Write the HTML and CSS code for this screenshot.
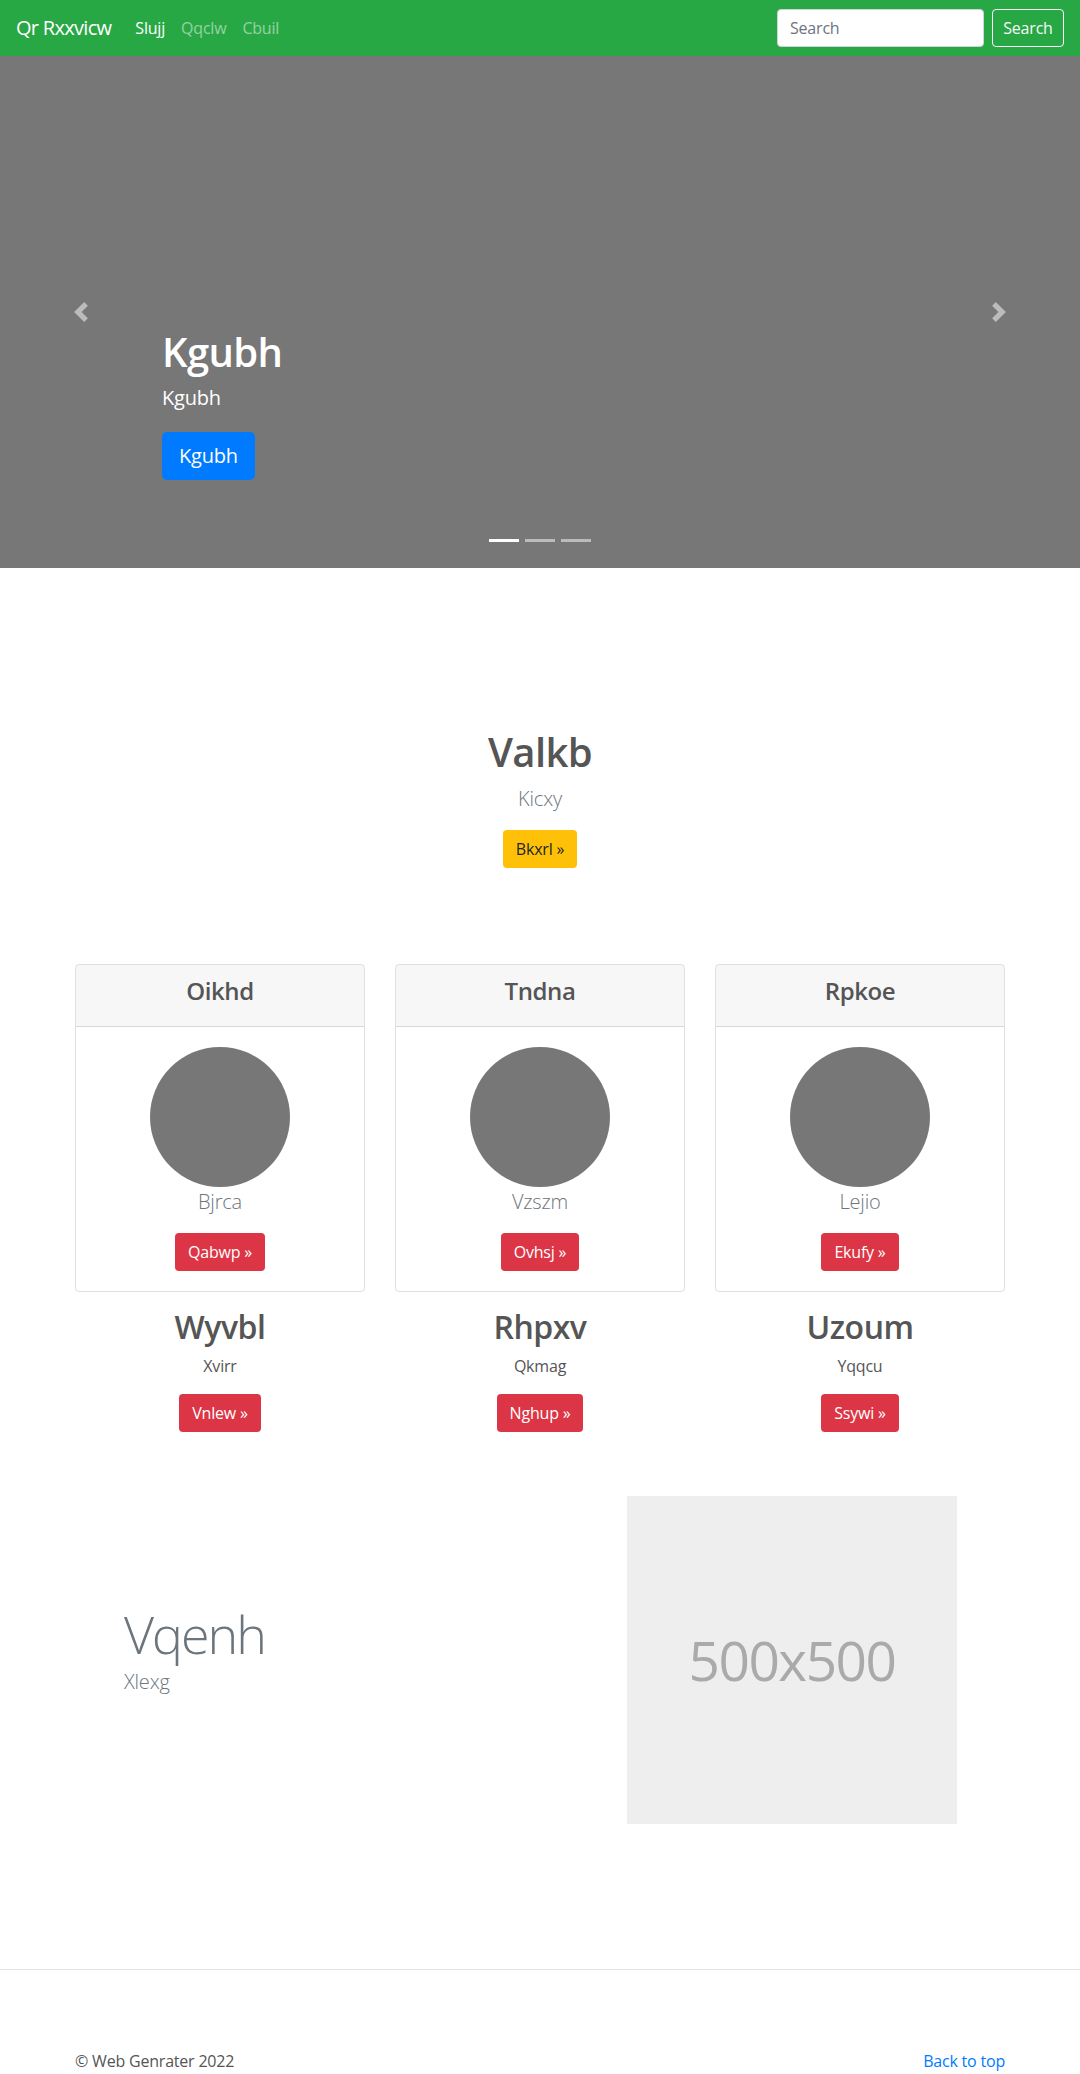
FILE: index.html
```html
<!DOCTYPE html>
<html lang="en">
<head>
<meta charset="utf-8">
<title>Qr Rxxvicw</title>
<link rel="stylesheet" href="styles.css">
</head>
<body>
<header class="navbar">
  <a class="brand" href="#">Qr Rxxvicw</a>
  <nav class="nav">
    <a class="nav-link active" href="#">Slujj</a>
    <a class="nav-link" href="#">Qqclw</a>
    <a class="nav-link" href="#">Cbuil</a>
  </nav>
  <form class="search">
    <input class="search-input" type="text" placeholder="Search">
    <button class="search-btn" type="button">Search</button>
  </form>
</header>

<section class="carousel">
  <a class="ctrl ctrl-prev" href="#">
    <svg width="20" height="20" viewBox="0 0 8 8" fill="#fff"><path d="M5.25 0l-4 4 4 4 1.5-1.5L4.25 4l2.5-2.5L5.25 0z"/></svg>
  </a>
  <a class="ctrl ctrl-next" href="#">
    <svg width="20" height="20" viewBox="0 0 8 8" fill="#fff"><path d="M2.75 0l-1.5 1.5L3.75 4l-2.5 2.5L2.75 8l4-4-4-4z"/></svg>
  </a>
  <div class="caption">
    <h1 class="caption-title">Kgubh</h1>
    <p class="caption-text">Kgubh</p>
    <p class="caption-action"><a class="btn btn-lg btn-primary" href="#">Kgubh</a></p>
  </div>
  <ol class="indicators">
    <li class="ind active"></li>
    <li class="ind"></li>
    <li class="ind"></li>
  </ol>
</section>

<section class="jumbo">
  <div class="container">
    <h1 class="jumbo-title">Valkb</h1>
    <p class="lead muted">Kicxy</p>
    <p class="last"><a class="btn btn-warning" href="#">Bkxrl »</a></p>
  </div>
</section>

<section class="container cols">
  <div class="col">
    <div class="card">
      <div class="card-header"><h4 class="card-title">Oikhd</h4></div>
      <div class="card-body">
        <svg class="circle" width="140" height="140"><circle cx="70" cy="70" r="70" fill="#777"/></svg>
        <p class="lead muted card-lead">Bjrca</p>
        <p class="last"><a class="btn btn-danger" href="#">Qabwp »</a></p>
      </div>
    </div>
    <h2 class="col-title">Wyvbl</h2>
    <p class="col-text">Xvirr</p>
    <p class="col-action"><a class="btn btn-danger" href="#">Vnlew »</a></p>
  </div>
  <div class="col">
    <div class="card">
      <div class="card-header"><h4 class="card-title">Tndna</h4></div>
      <div class="card-body">
        <svg class="circle" width="140" height="140"><circle cx="70" cy="70" r="70" fill="#777"/></svg>
        <p class="lead muted card-lead">Vzszm</p>
        <p class="last"><a class="btn btn-danger" href="#">Ovhsj »</a></p>
      </div>
    </div>
    <h2 class="col-title">Rhpxv</h2>
    <p class="col-text">Qkmag</p>
    <p class="col-action"><a class="btn btn-danger" href="#">Nghup »</a></p>
  </div>
  <div class="col">
    <div class="card">
      <div class="card-header"><h4 class="card-title">Rpkoe</h4></div>
      <div class="card-body">
        <svg class="circle" width="140" height="140"><circle cx="70" cy="70" r="70" fill="#777"/></svg>
        <p class="lead muted card-lead">Lejio</p>
        <p class="last"><a class="btn btn-danger" href="#">Ekufy »</a></p>
      </div>
    </div>
    <h2 class="col-title">Uzoum</h2>
    <p class="col-text">Yqqcu</p>
    <p class="col-action"><a class="btn btn-danger" href="#">Ssywi »</a></p>
  </div>
</section>

<section class="container featurette">
  <div class="feat-text">
    <h2 class="feat-heading">Vqenh</h2>
    <p class="lead muted feat-lead">Xlexg</p>
  </div>
  <div class="feat-image">500x500</div>
</section>

<footer class="footer">
  <div class="container footer-row">
    <p class="copy">© Web Genrater 2022</p>
    <a class="to-top" href="#">Back to top</a>
  </div>
</footer>
</body>
</html>
```

FILE: styles.css
```css
* { box-sizing: border-box; }

html, body { margin: 0; padding: 0; }

body {
  font-family: "Open Sans", "Noto Sans", sans-serif;
  font-size: 16px;
  line-height: 1.5;
  color: #555;
  background: #fff;
  letter-spacing: -0.2px;
}

a { text-decoration: none; }
p { margin: 0; }
h1, h2, h4 { margin: 0; }

/* navbar */
.navbar {
  display: flex;
  align-items: center;
  height: 56px;
  padding: 8px 16px;
  background: #28a745;
}
.brand {
  font-size: 20px;
  line-height: 30px;
  padding: 5px 0;
  margin-right: 16px;
  color: #fff;
  letter-spacing: -0.7px;
}
.nav { display: flex; }
.nav-link {
  padding: 8px;
  color: rgba(255, 255, 255, 0.5);
}
.nav-link.active { color: #fff; }
.search {
  margin: 0 0 0 auto;
  display: flex;
  align-items: center;
}
.search-input {
  width: 207px;
  height: 38px;
  padding: 6px 12px;
  border: 1px solid #ced4da;
  border-radius: 4px;
  font-family: inherit;
  font-size: 16px;
  letter-spacing: -0.2px;
  color: #495057;
  margin-right: 8px;
}
.search-input::placeholder { color: #6c757d; }
.search-btn {
  height: 38px;
  width: 72px;
  padding: 6px 0;
  border: 1px solid #f8f9fa;
  border-radius: 4px;
  background: transparent;
  color: #f8f9fa;
  font-family: inherit;
  font-size: 16px;
  letter-spacing: -0.2px;
  line-height: 1.5;
}

/* carousel */
.carousel {
  position: relative;
  height: 512px;
  background: #777;
  margin-bottom: 64px;
}
.ctrl {
  position: absolute;
  top: 0;
  bottom: 0;
  width: 15%;
  display: flex;
  align-items: center;
  justify-content: center;
  opacity: 0.5;
}
.ctrl-prev { left: 0; }
.ctrl-next { right: 0; }
.caption {
  position: absolute;
  left: 15%;
  right: 15%;
  bottom: 48px;
  padding: 20px 0;
  color: #fff;
}
.caption-title {
  font-size: 40px;
  font-weight: 600;
  line-height: 1.2;
  margin-bottom: 8px;
  letter-spacing: -0.6px;
}
.caption-text {
  font-size: 20px;
  line-height: 1.4;
  margin-bottom: 20px;
}
.caption-action {
  line-height: 1.4;
  margin-bottom: 20px;
}
.indicators {
  position: absolute;
  left: 0;
  right: 0;
  bottom: 0;
  margin: 0 0 16px;
  padding: 0;
  list-style: none;
  display: flex;
  justify-content: center;
}
.ind {
  width: 30px;
  height: 23px;
  margin: 0 3px;
  border-top: 10px solid transparent;
  border-bottom: 10px solid transparent;
  background: #fff;
  background-clip: padding-box;
  opacity: 0.5;
}
.ind.active { opacity: 1; }

/* buttons */
.btn {
  display: inline-block;
  padding: 6px 12px;
  font-size: 16px;
  line-height: 1.5;
  border: 1px solid transparent;
  border-radius: 4px;
  vertical-align: middle;
}
.btn-lg {
  padding: 8px 16px;
  font-size: 20px;
  border-radius: 5px;
}
.btn-primary { background: #007bff; color: #fff; }
.btn-warning { background: #ffc107; color: #212529; }
.btn-danger { background: #dc3545; color: #fff; }

/* common */
.container {
  width: 930px;
  margin: 0 auto;
}
.lead {
  font-size: 20px;
  font-weight: 300;
}
.muted { color: #6c757d; }
.last { margin-bottom: 0; }

/* jumbotron */
.jumbo {
  padding: 96px 0;
  text-align: center;
}
.jumbo-title {
  font-size: 40px;
  font-weight: 600;
  line-height: 1.2;
  margin-bottom: 8px;
  letter-spacing: -0.6px;
}
.jumbo .lead { margin-bottom: 16px; }

/* columns */
.cols {
  display: grid;
  grid-template-columns: repeat(3, 1fr);
  column-gap: 30px;
  text-align: center;
}
.card {
  border: 1px solid rgba(0, 0, 0, 0.125);
  border-radius: 4px;
  margin-bottom: 16px;
  overflow: hidden;
}
.card-header {
  padding: 12px 20px;
  background: rgba(0, 0, 0, 0.03);
  border-bottom: 1px solid rgba(0, 0, 0, 0.125);
}
.card-title {
  font-size: 24px;
  font-weight: 600;
  line-height: 1.2;
  margin-bottom: 8px;
  letter-spacing: -0.4px;
}
.card-body { padding: 20px; }
.circle { display: block; margin: 0 auto; }
.card-lead { margin-bottom: 16px; }
.col-title {
  font-size: 32px;
  font-weight: 600;
  line-height: 1.2;
  margin-bottom: 8px;
  letter-spacing: -0.5px;
}
.col-text { margin-bottom: 16px; }
.col-action { margin-bottom: 16px; }

/* featurette */
.featurette {
  display: flex;
  align-items: center;
  margin-top: 48px;
}
.feat-text {
  flex: 1;
  padding-left: 49px;
}
.feat-heading {
  font-size: 52px;
  font-weight: 300;
  line-height: 1;
  letter-spacing: -2px;
  color: #6c757d;
  margin-bottom: 7px;
}
.feat-lead { margin-bottom: 16px; }
.feat-image {
  width: 330px;
  height: 328px;
  margin-right: 48px;
  background: #eee;
  color: #aaa;
  font-size: 55px;
  font-weight: 400;
  letter-spacing: -1.5px;
  display: flex;
  align-items: center;
  justify-content: center;
}

/* footer */
.footer {
  margin-top: 145px;
  border-top: 1px solid rgba(0, 0, 0, 0.1);
  padding-top: 79px;
}
.footer-row {
  display: flex;
  justify-content: space-between;
}
.to-top { color: #007bff; }
```
